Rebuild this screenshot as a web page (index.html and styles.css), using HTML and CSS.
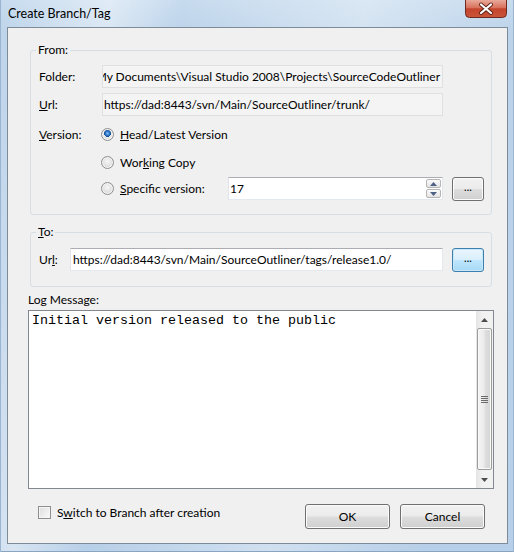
FILE: index.html
```html
<!DOCTYPE html>
<html>
<head>
<meta charset="utf-8">
<link rel="stylesheet" href="styles.css">
</head>
<body>
<div class="window">
  <div class="titlebar">
    <span class="title">Create Branch/Tag</span>
    <div class="close">
      <svg width="42" height="18" viewBox="0 0 42 18">
        <defs>
          <linearGradient id="cg" x1="0" y1="0" x2="0" y2="1">
            <stop offset="0" stop-color="#e9a99b"/>
            <stop offset="0.45" stop-color="#d8705b"/>
            <stop offset="0.5" stop-color="#c4442c"/>
            <stop offset="1" stop-color="#c9553b"/>
          </linearGradient>
        </defs>
        <path d="M0.5 0 V13.5 Q0.5 17.5 4.5 17.5 H37.5 Q41.5 17.5 41.5 13.5 V0" fill="url(#cg)" stroke="#6e2a20"/>
        <path d="M16 4.5 L26 13 M26 4.5 L16 13" stroke="#5a1f16" stroke-width="4" stroke-linecap="round"/>
        <path d="M16 4.5 L26 13 M26 4.5 L16 13" stroke="#ffffff" stroke-width="2.2" stroke-linecap="round"/>
      </svg>
    </div>
  </div>
  <div class="client">
    <fieldset class="group from">
      <legend>From:</legend>
      <div class="row r1">
        <span class="lbl">Folder:</span>
        <div class="field ro"><span>My Documents\Visual Studio 2008\Projects\SourceCodeOutliner</span></div>
      </div>
      <div class="row r2">
        <span class="lbl"><u>U</u>rl:</span>
        <div class="field ro start"><span>https://dad:8443/svn/Main/SourceOutliner/trunk/</span></div>
      </div>
      <div class="row r3">
        <span class="lbl"><u>V</u>ersion:</span>
        <span class="radio checked"></span><span class="rtext"><u>H</u>ead/Latest Version</span>
      </div>
      <div class="row r4">
        <span class="lbl"></span>
        <span class="radio"></span><span class="rtext">Wor<u>k</u>ing Copy</span>
      </div>
      <div class="row r5">
        <span class="lbl"></span>
        <span class="radio"></span><span class="rtext wide"><u>S</u>pecific version:</span>
        <div class="spin">
          <span class="spintext">17</span>
          <div class="spinbtns">
            <div class="sb up"><svg width="7" height="4" viewBox="0 0 7 4"><path d="M0 4 L3.5 0 L7 4Z" fill="#4d6185"/></svg></div>
            <div class="sb down"><svg width="7" height="4" viewBox="0 0 7 4"><path d="M0 0 L3.5 4 L7 0Z" fill="#4d6185"/></svg></div>
          </div>
        </div>
        <button class="btn dots">...</button>
      </div>
    </fieldset>

    <fieldset class="group to">
      <legend><u>T</u>o:</legend>
      <div class="row r6">
        <span class="lbl short">Ur<u>l</u>:</span>
        <div class="field edit"><span>https://dad:8443/svn/Main/SourceOutliner/tags/release1.0/</span></div>
        <button class="btn dots focus">...</button>
      </div>
    </fieldset>

    <div class="logsec">
      <div class="loglabel">Log Message:</div>
      <div class="logbox">
        <div class="logtext">Initial version released to the public</div>
        <div class="vscroll">
          <div class="arrow"><svg width="7" height="4" viewBox="0 0 7 4"><path d="M0 4 L3.5 0 L7 4Z" fill="#4e4e4e"/></svg></div>
          <div class="track"><div class="thumb"><span class="grip"></span></div></div>
          <div class="arrow"><svg width="7" height="4" viewBox="0 0 7 4"><path d="M0 0 L3.5 4 L7 0Z" fill="#4e4e4e"/></svg></div>
        </div>
      </div>
    </div>

    <div class="bottom">
      <label class="check"><span class="cbox"></span><span>S<u>w</u>itch to Branch after creation</span></label>
      <div class="buttons">
        <button class="btn big">OK</button>
        <button class="btn big">Cancel</button>
      </div>
    </div>
  </div>
</div>
</body>
</html>
```

FILE: styles.css
```css
html, body {
  margin: 0;
  padding: 0;
  background: #ffffff;
}

.window {
  width: 514px;
  height: 552px;
  box-sizing: border-box;
  padding: 0 6px 8px 7px;
  display: flex;
  flex-direction: column;
  font-family: "Lato", "Noto Sans", sans-serif;
  font-size: 12px;
  color: #000;
  background:
    linear-gradient(100deg, rgba(255,255,255,0) 0%, rgba(255,255,255,0.45) 18%, rgba(255,255,255,0) 30%, rgba(255,255,255,0.35) 60%, rgba(255,255,255,0) 85%),
    linear-gradient(180deg, #c7dbee 0%, #bcd3ea 6%, #b7cfe8 100%);
  box-shadow: inset 1px 0 0 #9bb5d0, inset -1px 0 0 #9bb5d0, inset 0 -1px 0 #8aa5c2;
}

.titlebar {
  height: 27px;
  flex: none;
  display: flex;
  align-items: flex-start;
  justify-content: space-between;
}

.title {
  margin: 6px 0 0 1px;
  line-height: 16px;
  font-size: 12.5px;
}

.close {
  width: 42px;
  height: 18px;
  margin-right: 1px;
}
.close svg { display: block; }

.client {
  flex: 1;
  background: #f0f0f0;
  border: 1px solid #7e8c9a;
  padding: 0 14px 0 21px;
  display: flex;
  flex-direction: column;
}

.group {
  margin: 0 1px;
  border: 1px solid #d5dfe5;
  border-radius: 3px;
  padding: 0 8px 14px 8px;
  min-width: 0;
}
.group legend {
  padding: 0 2px;
  margin-left: -3px;
  line-height: 16px;
}
.from { margin-top: 14px; }
.to { margin-top: 9px; padding-bottom: 15px; }

.row {
  display: flex;
  align-items: center;
}
.r1 { margin-top: 7px; height: 23px; }
.r2 { margin-top: 5px; height: 23px; }
.r3 { margin-top: 8px; height: 20px; }
.r4 { margin-top: 8px; height: 20px; }
.r5 { margin-top: 5px; height: 23px; }
.r6 { margin-top: 8px; height: 23px; }

.lbl {
  width: 63px;
  flex: none;
}
.lbl.short { width: 31px; }

.field {
  height: 23px;
  box-sizing: border-box;
  display: flex;
  align-items: center;
  overflow: hidden;
  white-space: nowrap;
  flex: none;
}
.field.ro {
  width: 341px;
  background: #f4f4f4;
  border: 1px solid #e0e0e0;
  justify-content: flex-end;
  padding: 0 2px;
}
.field.ro.start {
  justify-content: flex-start;
  padding-left: 1px;
}
.field.edit {
  width: 373px;
  background: #fff;
  border: 1px solid #e3e9ef;
  border-top-color: #abadb3;
  border-left-color: #e2e3ea;
  padding-left: 2px;
}

.radio {
  width: 13px;
  height: 13px;
  box-sizing: border-box;
  border-radius: 50%;
  border: 1px solid #8e8f8f;
  background: radial-gradient(circle at 50% 40%, #f6f6f6 0, #e4e4e4 45%, #cfcfcf 100%);
  box-shadow: inset 0 0 0 1px #f4f4f4;
  flex: none;
  margin-left: -1px;
}
.radio.checked {
  background: radial-gradient(circle at 50% 40%, #7fc1f1 0, #2a72c4 2.2px, #174a8a 3.5px, #e9e9e9 3.6px, #d6d6d6 100%);
}
.rtext {
  margin-left: 6px;
  white-space: nowrap;
}
.rtext.wide { width: 108px; flex: none; }

.spin {
  width: 215px;
  height: 23px;
  box-sizing: border-box;
  background: #fff;
  border: 1px solid #e3e9ef;
  border-top-color: #abadb3;
  border-left-color: #e2e3ea;
  display: flex;
  align-items: center;
  justify-content: space-between;
  padding-left: 1px;
  flex: none;
}
.spinbtns {
  display: flex;
  flex-direction: column;
  gap: 1px;
  margin-right: 1px;
}
.sb {
  width: 15px;
  height: 9px;
  box-sizing: border-box;
  border: 1px solid #b5b5b5;
  border-radius: 2px;
  background: linear-gradient(180deg, #fbfbfb, #e4e4e4);
  display: flex;
  align-items: center;
  justify-content: center;
}
.sb svg { display: block; }

.btn {
  font-family: inherit;
  font-size: 12px;
  color: #000;
  box-sizing: border-box;
  border: 1px solid #707070;
  border-radius: 3px;
  background: linear-gradient(180deg, #f2f2f2 0%, #ebebeb 48%, #dddddd 52%, #cfcfcf 100%);
  box-shadow: inset 0 0 0 1px #fbfbfb;
  padding: 0;
  flex: none;
}
.dots {
  width: 32px;
  height: 24px;
  margin-left: 9px;
  line-height: 10px;
  padding-bottom: 4px;
  font-size: 11px;
}
.dots.focus {
  border-color: #3c7fb1;
  background: linear-gradient(180deg, #eaf6fd 0%, #d9f0fc 48%, #bee6fd 52%, #a7d9f5 100%);
  box-shadow: inset 0 0 0 1px #c8e6f6;
}

.logsec {
  margin: 5px -1px 0 -1px;
}
.loglabel {
  line-height: 16px;
}
.logbox {
  margin-top: 2px;
  height: 179px;
  box-sizing: border-box;
  border: 1px solid #828790;
  background: #fff;
  display: flex;
}
.logtext {
  flex: 1;
  font-family: "Liberation Mono", "Courier New", monospace;
  font-size: 13.33px;
  line-height: 16px;
  padding: 2px 3px;
  white-space: pre;
}
.vscroll {
  width: 17px;
  flex: none;
  display: flex;
  flex-direction: column;
  background: linear-gradient(90deg, #e5e5e5, #f2f2f2 40%, #f2f2f2);
}
.arrow {
  height: 17px;
  flex: none;
  display: flex;
  align-items: center;
  justify-content: center;
}
.arrow svg { display: block; }
.track {
  flex: 1;
  padding: 0 1px;
  display: flex;
  flex-direction: column;
}
.thumb {
  flex: 1;
  margin: 0 0 1px 0;
  border: 1px solid #9c9c9c;
  border-radius: 2px;
  background: linear-gradient(90deg, #f4f4f4 0%, #ececec 45%, #dedede 55%, #d4d4d4 100%);
  box-shadow: inset 0 0 0 1px #f9f9f9;
  display: flex;
  align-items: center;
  justify-content: center;
}
.grip {
  width: 7px;
  height: 7px;
  background: repeating-linear-gradient(180deg, #6a6a6a 0 1px, transparent 1px 2px);
}

.bottom {
  margin-top: 15px;
  display: flex;
  align-items: flex-start;
  justify-content: space-between;
  height: 25px;
}
.check {
  display: flex;
  align-items: center;
  height: 13px;
  margin-left: 9px;
  margin-top: 2px;
}
.cbox {
  width: 13px;
  height: 13px;
  box-sizing: border-box;
  border: 1px solid #8e8f8f;
  background: linear-gradient(135deg, #dcdcdc, #fbfbfb);
  box-shadow: inset 0 0 0 1px #f4f4f4;
  margin-right: 6px;
}
.buttons {
  display: flex;
  gap: 10px;
  margin-right: 8px;
}
.btn.big {
  width: 85px;
  height: 25px;
}
```
